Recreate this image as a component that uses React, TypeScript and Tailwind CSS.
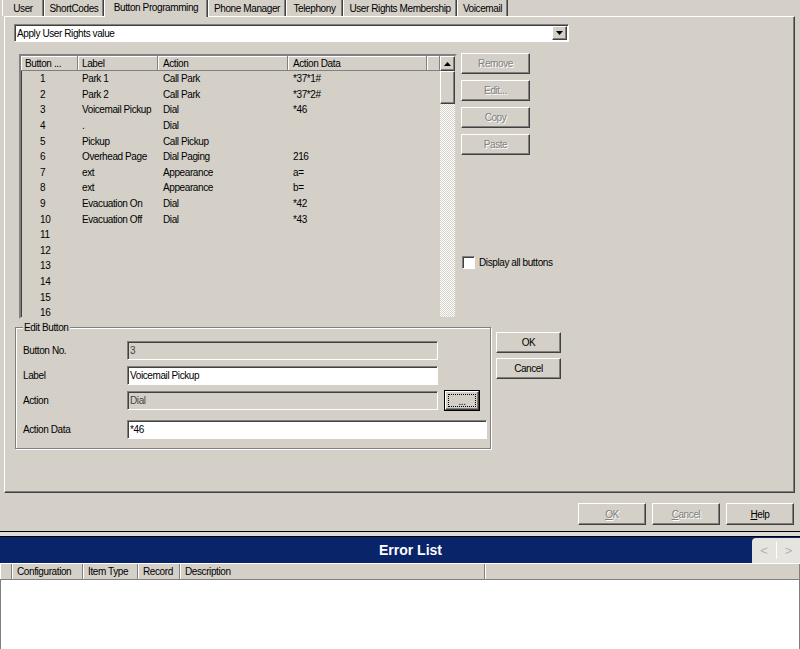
import React from "react";

const raised =
  "border border-t-white border-l-white border-r-[#404040] border-b-[#404040] shadow-[inset_-1px_-1px_0_#808080]";
const sunken =
  "border border-t-[#808080] border-l-[#808080] border-r-white border-b-white shadow-[inset_1px_1px_0_#404040]";
const dimText = "text-[#808080] [text-shadow:1px_1px_0_#ffffff]";

const rows: string[][] = [
  ["1", "Park 1", "Call Park", "*37*1#"],
  ["2", "Park 2", "Call Park", "*37*2#"],
  ["3", "Voicemail Pickup", "Dial", "*46"],
  ["4", ".", "Dial", ""],
  ["5", "Pickup", "Call Pickup", ""],
  ["6", "Overhead Page", "Dial Paging", "216"],
  ["7", "ext", "Appearance", "a="],
  ["8", "ext", "Appearance", "b="],
  ["9", "Evacuation On", "Dial", "*42"],
  ["10", "Evacuation Off", "Dial", "*43"],
  ["11", "", "", ""],
  ["12", "", "", ""],
  ["13", "", "", ""],
  ["14", "", "", ""],
  ["15", "", "", ""],
  ["16", "", "", ""],
];

function Tab({ label, w, active }: { label: string; w: string; active?: boolean }) {
  if (active) {
    return (
      <div
        className={`${w} h-[17px] -mb-px relative z-10 shrink-0 whitespace-nowrap bg-[#d4d0c8] border-l border-l-white border-r border-r-[#404040] shadow-[inset_-1px_0_0_#808080] flex items-start justify-center pt-[1px]`}
      >
        {label}
      </div>
    );
  }
  return (
    <div
      className={`${w} h-[16px] shrink-0 whitespace-nowrap border-l border-l-white border-r border-r-[#404040] shadow-[inset_-1px_0_0_#808080] flex items-center justify-center pt-px`}
    >
      {label}
    </div>
  );
}

function Btn({
  children,
  w,
  h = "h-[21px]",
  disabled,
}: {
  children: React.ReactNode;
  w: string;
  h?: string;
  disabled?: boolean;
}) {
  return (
    <div
      className={`${w} ${h} ${raised} bg-[#d4d0c8] flex items-center justify-center ${
        disabled ? dimText : "text-black"
      }`}
    >
      {children}
    </div>
  );
}

function Arrow({ up }: { up?: boolean }) {
  return (
    <svg width="7" height="4" viewBox="0 0 7 4">
      {up ? <polygon points="0,4 7,4 3.5,0" fill="#000" /> : <polygon points="0,0 7,0 3.5,4" fill="#000" />}
    </svg>
  );
}

export default function App() {
  return (
    <div className="w-[800px] h-[649px] overflow-hidden bg-[#d4d0c8] text-black text-[10px] tracking-[-0.4px] leading-[13px] font-['Liberation_Sans',sans-serif] flex flex-col">
      {/* tabs */}
      <div className="flex items-end h-[16px] pl-[2px]">
        <Tab label="User" w="w-[42px]" />
        <Tab label="ShortCodes" w="w-[60px]" />
        <Tab label="Button Programming" w="w-[104px]" active />
        <Tab label="Phone Manager" w="w-[78px]" />
        <Tab label="Telephony" w="w-[57px]" />
        <Tab label="User Rights Membership" w="w-[114px]" />
        <Tab label="Voicemail" w="w-[51px]" />
      </div>

      {/* tab panel */}
      <div className="ml-[4px] w-[791px] h-[477px] shrink-0 border border-t-white border-l-white border-r-[#404040] border-b-[#404040] shadow-[inset_-1px_-1px_0_#808080] flex flex-col">
        {/* dropdown */}
        <div className={`mt-[7px] ml-[9px] w-[555px] h-[18px] ${sunken} bg-white flex items-center`}>
          <span className="pl-[2px] flex-1">Apply User Rights value</span>
          <div className={`w-[15px] h-[14px] mr-px ${raised} bg-[#d4d0c8] flex items-center justify-center`}>
            <Arrow />
          </div>
        </div>

        {/* list + side buttons */}
        <div className="flex mt-[11px]">
          <div className="ml-[14px] mt-px w-[438px] h-[265px] shrink-0 border-2 border-t-[#808080] border-l-[#808080] border-r-[#d4d0c8] border-b-[#d4d0c8] shadow-[inset_1px_1px_0_#404040] flex overflow-hidden">
            <div className="w-[419px] flex flex-col">
              <div className="flex h-[15px] shrink-0">
                {[
                  ["Button ...", "w-[57px]", "pl-[4px]"],
                  ["Label", "w-[80px]", "pl-[4px]"],
                  ["Action", "w-[130px]", "pl-[5px]"],
                  ["Action Data", "w-[139px]", "pl-[5px]"],
                  ["", "flex-1", ""],
                ].map(([t, w, p], i) => (
                  <div
                    key={i}
                    className={`${w} ${p} h-full whitespace-nowrap border-r border-b border-r-[#808080] border-b-[#808080] shadow-[inset_1px_1px_0_#ffffff] flex items-center`}
                  >
                    {t}
                  </div>
                ))}
              </div>
              {rows.map((r) => (
                <div key={r[0]} className="flex h-[15.6px] shrink-0 items-center whitespace-nowrap">
                  <div className="w-[57px] pl-[19px]">{r[0]}</div>
                  <div className="w-[80px] pl-[4px]">{r[1]}</div>
                  <div className="w-[130px] pl-[5px]">{r[2]}</div>
                  <div className="w-[139px] pl-[5px]">{r[3]}</div>
                </div>
              ))}
            </div>
            <div className="w-[15px] flex flex-col">
              <div className={`h-[15px] shrink-0 ${raised} bg-[#d4d0c8] flex items-center justify-center`}>
                <Arrow up />
              </div>
              <div className={`h-[33px] shrink-0 ${raised} bg-[#d4d0c8]`} />
              <div className="flex-1 bg-[repeating-conic-gradient(#ffffff_0%_25%,#d4d0c8_0%_50%)] [background-size:2px_2px]" />
            </div>
          </div>

          <div className="ml-[4px] w-[69px] shrink-0 flex flex-col">
            <div className="flex flex-col gap-[6px]">
              <Btn w="w-[69px]" disabled>Remove</Btn>
              <Btn w="w-[69px]" disabled>Edit...</Btn>
              <Btn w="w-[69px]" disabled>Copy</Btn>
              <Btn w="w-[69px]" disabled>Paste</Btn>
            </div>
            <div className="mt-[101px] ml-px flex items-center whitespace-nowrap">
              <div className={`w-[13px] h-[13px] shrink-0 ${sunken} bg-white`} />
              <span className="ml-[4px]">Display all buttons</span>
            </div>
          </div>
        </div>

        {/* edit group + ok/cancel */}
        <div className="flex mt-[8px]">
          <div className="relative ml-[10px] w-[476px] h-[122px] shrink-0 border border-[#808080] shadow-[inset_1px_1px_0_#ffffff,1px_1px_0_#ffffff] pl-[7px] pt-[13px]">
            <span className="absolute left-[7px] -top-[7px] px-px bg-[#d4d0c8]">Edit Button</span>
            <div className="flex items-center h-[19px]">
              <span className="w-[104px]">Button No.</span>
              <div className={`w-[311px] h-[19px] ${sunken} bg-[#d4d0c8] pl-[2px] flex items-center text-[#444]`}>3</div>
            </div>
            <div className="flex items-center h-[19px] mt-[6px]">
              <span className="w-[104px]">Label</span>
              <div className={`w-[311px] h-[19px] ${sunken} bg-white pl-[2px] flex items-center`}>Voicemail Pickup</div>
            </div>
            <div className="flex items-center h-[19px] mt-[6px]">
              <span className="w-[104px]">Action</span>
              <div className={`w-[311px] h-[19px] ${sunken} bg-[#d4d0c8] pl-[2px] flex items-center text-[#444]`}>Dial</div>
              <div className="ml-[6px] w-[36px] h-[21px] border border-black">
                <div className={`w-full h-full ${raised} bg-[#d4d0c8] p-[2px]`}>
                  <div className="w-full h-full border border-dotted border-black flex items-end justify-center leading-[9px]">...</div>
                </div>
              </div>
            </div>
            <div className="flex items-center h-[19px] mt-[10px]">
              <span className="w-[104px]">Action Data</span>
              <div className={`w-[360px] h-[19px] ${sunken} bg-white pl-[2px] flex items-center`}>*46</div>
            </div>
          </div>
          <div className="ml-[5px] mt-[5px] flex flex-col gap-[5px]">
            <Btn w="w-[65px]">OK</Btn>
            <Btn w="w-[65px]">Cancel</Btn>
          </div>
        </div>
      </div>

      {/* dialog buttons */}
      <div className="mt-[10px] flex justify-end gap-[6px] pr-[6px]">
        <Btn w="w-[68px]" h="h-[22px]" disabled>
          <span className="underline">O</span>K
        </Btn>
        <Btn w="w-[68px]" h="h-[22px]" disabled>
          <span className="underline">C</span>ancel
        </Btn>
        <Btn w="w-[68px]" h="h-[22px]">
          <span className="underline">H</span>elp
        </Btn>
      </div>

      {/* error list */}
      <div className="mt-[6px] h-px bg-black shrink-0" />
      <div className="h-[4px] bg-[#dddbd6] shrink-0" />
      <div className="h-px bg-black shrink-0" />
      <div className="h-[26px] shrink-0 bg-[#0a246a] flex items-center">
        <span className="pl-[379px] text-white text-[14px] tracking-normal font-bold">Error List</span>
        <div className="ml-auto h-[25px] w-[48px] rounded-tl-[4px] bg-[#e6e4df] flex items-center text-[#b4b4b4] text-[13px] tracking-normal">
          <span className="w-[24px] text-center">&lt;</span>
          <div className="w-px h-[17px] bg-white" />
          <span className="flex-1 text-center">&gt;</span>
        </div>
      </div>
      <div className="h-[17px] shrink-0 flex border-t border-t-white">
        {[
          ["", "w-[12px]"],
          ["Configuration", "w-[71px]"],
          ["Item Type", "w-[55px]"],
          ["Record", "w-[42px]"],
          ["Description", "w-[305px]"],
          ["", "flex-1"],
        ].map(([t, w], i) => (
          <div
            key={i}
            className={`${w} h-full pl-[5px] border-r border-b border-r-[#808080] border-b-[#808080] shadow-[inset_1px_0_0_#ffffff] flex items-center whitespace-nowrap`}
          >
            {t}
          </div>
        ))}
      </div>
      <div className="flex-1 bg-white border-l border-r border-[#808080]" />
    </div>
  );
}
